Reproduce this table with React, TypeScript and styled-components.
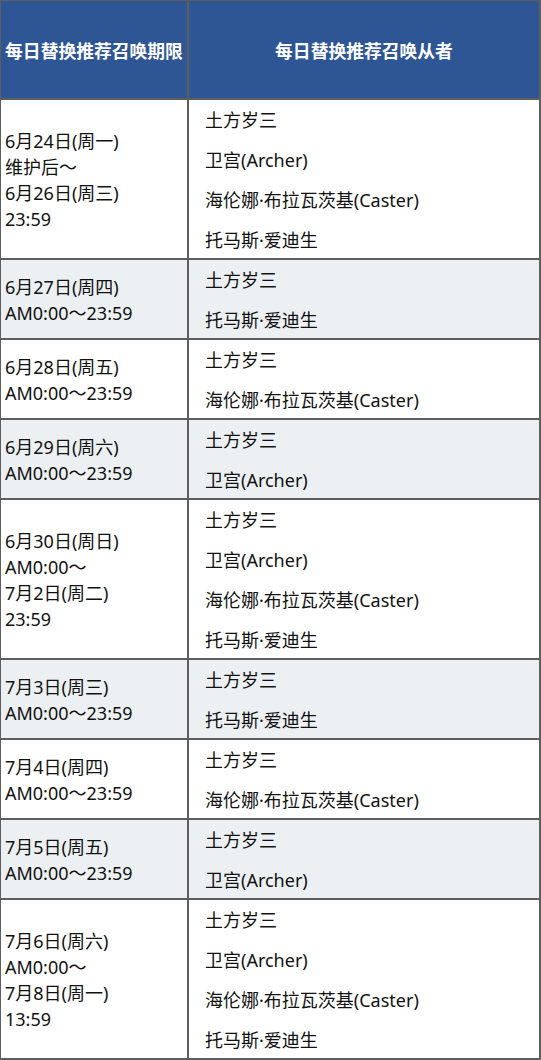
import React from 'react';
import styled, { createGlobalStyle } from 'styled-components';

const HIJIKATA = '土方岁三';
const EMIYA = '卫宫(Archer)';
const HELENA = '海伦娜·布拉瓦茨基(Caster)';
const EDISON = '托马斯·爱迪生';

interface Schedule {
  period: string[];
  servants: string[];
}

const schedules: Schedule[] = [
  { period: ['6月24日(周一)', '维护后～', '6月26日(周三)', '23:59'], servants: [HIJIKATA, EMIYA, HELENA, EDISON] },
  { period: ['6月27日(周四)', 'AM0:00～23:59'], servants: [HIJIKATA, EDISON] },
  { period: ['6月28日(周五)', 'AM0:00～23:59'], servants: [HIJIKATA, HELENA] },
  { period: ['6月29日(周六)', 'AM0:00～23:59'], servants: [HIJIKATA, EMIYA] },
  { period: ['6月30日(周日)', 'AM0:00～', '7月2日(周二)', '23:59'], servants: [HIJIKATA, EMIYA, HELENA, EDISON] },
  { period: ['7月3日(周三)', 'AM0:00～23:59'], servants: [HIJIKATA, EDISON] },
  { period: ['7月4日(周四)', 'AM0:00～23:59'], servants: [HIJIKATA, HELENA] },
  { period: ['7月5日(周五)', 'AM0:00～23:59'], servants: [HIJIKATA, EMIYA] },
  { period: ['7月6日(周六)', 'AM0:00～', '7月8日(周一)', '13:59'], servants: [HIJIKATA, EMIYA, HELENA, EDISON] },
];

const App = () => {
  return (
    <>
      <GlobalStyle />
      <Table>
        <HeaderRow>
          <HeaderCell>每日替换推荐召唤期限</HeaderCell>
          <HeaderCell>每日替换推荐召唤从者</HeaderCell>
        </HeaderRow>
        {schedules.map((s, i) => (
          <Row key={i} $lines={s.servants.length} $shaded={i % 2 === 1}>
            <PeriodCell>
              {s.period.map((p) => (
                <PeriodLine key={p}>{p}</PeriodLine>
              ))}
            </PeriodCell>
            <ServantCell>
              {s.servants.map((name) => (
                <ServantLine key={name}>{name}</ServantLine>
              ))}
            </ServantCell>
          </Row>
        ))}
      </Table>
    </>
  );
};

export default App;

const GlobalStyle = createGlobalStyle`
  body {
    margin: 0;
    background: #ffffff;
    font-family: "Noto Sans", "Noto Sans CJK SC", sans-serif;
  }
`;

const Table = styled.div`
  width: 541px;
  box-sizing: border-box;
  border-top: 1px solid #5e5e5e;
  border-left: 1px solid #5e5e5e;
  color: #111111;
  font-size: 18px;
`;

const HeaderRow = styled.div`
  display: grid;
  grid-template-columns: 188px 1fr;
  height: 99px;
  box-sizing: border-box;
  border-bottom: 2px solid #5e5e5e;
  background: #2e5594;
`;

const HeaderCell = styled.div`
  display: flex;
  align-items: center;
  justify-content: center;
  border-right: 2px solid #5e5e5e;
  color: #ffffff;
  font-weight: 700;
  font-size: 17.8px;
  white-space: nowrap;
`;

const Row = styled.div<{ $lines: number; $shaded: boolean }>`
  display: grid;
  grid-template-columns: 188px 1fr;
  height: ${(p) => p.$lines * 40}px;
  box-sizing: border-box;
  border-bottom: 2px solid #5e5e5e;
  background: ${(p) => (p.$shaded ? '#ecf0f3' : '#ffffff')};
`;

const PeriodCell = styled.div`
  display: flex;
  flex-direction: column;
  justify-content: center;
  padding-left: 4px;
  border-right: 2px solid #5e5e5e;
`;

const PeriodLine = styled.div`
  line-height: 26px;
  white-space: nowrap;
`;

const ServantCell = styled.div`
  display: flex;
  flex-direction: column;
  padding-left: 16px;
  border-right: 2px solid #5e5e5e;
`;

const ServantLine = styled.div`
  height: 40px;
  line-height: 40px;
  flex-shrink: 0;
  white-space: nowrap;
`;
